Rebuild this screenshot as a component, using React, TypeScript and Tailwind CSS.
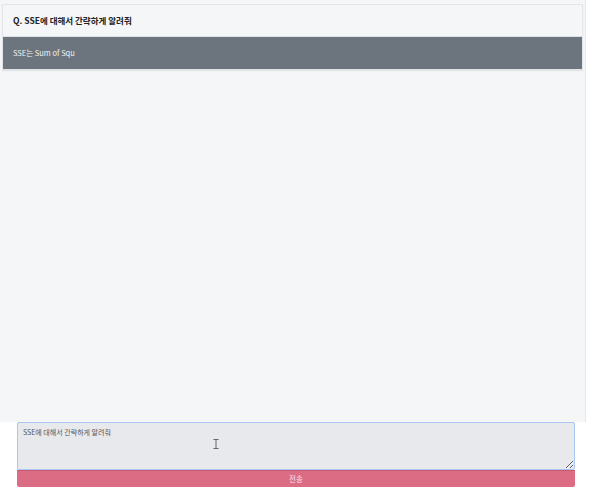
import React from "react";

export default function App() {
  const font = { fontFamily: '"Noto Sans CJK KR", "Noto Sans", sans-serif' };
  return (
    <div className="w-[590px] h-[489px] bg-white flex flex-col overflow-hidden" style={font}>
      <div className="w-[586px] h-[422px] bg-[#f5f6f8] border-r border-[#e6e8eb] pt-[4px] pl-[2px] pr-[2px]">
        <div className="w-[581px] border border-[#e3e5e8] shadow-[0_1px_1px_rgba(0,0,0,0.08)]">
          <div className="h-[32px] flex items-center pl-[10px] bg-[#f5f6f8] border-b border-[#dfe1e4]">
            <span className="text-[8.5px] font-bold text-[#222]">Q. SSE에 대해서 간략하게 알려줘</span>
          </div>
          <div className="h-[32px] flex items-center pl-[10px] bg-[#6c757d]">
            <span className="text-[7.5px] text-[#f1f2f4]">SSE는 Sum of Squ</span>
          </div>
        </div>
      </div>
      <div className="pl-[17px] pr-[15px] flex flex-col relative">
        <textarea
          readOnly
          defaultValue="SSE에 대해서 간략하게 알려줘"
          className="w-full h-[48px] bg-[#e8e9ed] border-[1.5px] border-[#a9c6f2] rounded-[2px] px-[5px] py-[4px] text-[7px] text-[#555] outline-none"
          style={font}
        />
        <button className="w-full h-[17px] bg-[#dc6b84] border-t border-[#c85a73] rounded-b-[2px] text-[7.5px] text-[#fbe3e8] flex items-center justify-center">
          전송
        </button>
        <svg className="absolute left-[213px] top-[17px]" width="6" height="10" viewBox="0 0 6 10">
          <path d="M0.5 0.5h5M3 0.5v9M0.5 9.5h5" stroke="#666" strokeWidth="1" fill="none" />
        </svg>
      </div>
    </div>
  );
}
